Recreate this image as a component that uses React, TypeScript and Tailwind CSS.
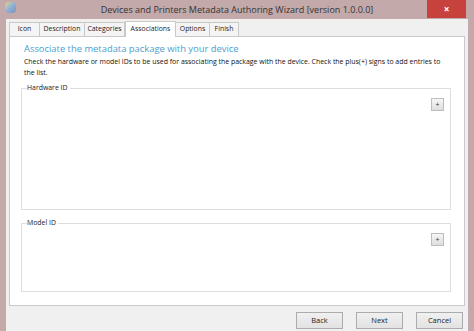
import React from 'react';

const font = { fontFamily: '"Open Sans", "Noto Sans", sans-serif' };

function PlusButton() {
  return (
    <div className="flex h-[13px] w-[13px] items-center justify-center border border-[#bdbdbd] bg-gradient-to-b from-[#f6f6f6] to-[#dedede] text-[7px] leading-none text-[#333]">
      +
    </div>
  );
}

function GroupBox({ label, className }: { label: string; className: string }) {
  return (
    <div className={`relative border border-[#dedede] ${className}`}>
      <span className="absolute -top-[6px] left-[5px] bg-white pr-[2px] text-[6.9px] leading-[10px] text-[#1a1a1a]">
        {label}
      </span>
      <div className="flex justify-end pr-[6px] pt-[9px]">
        <PlusButton />
      </div>
    </div>
  );
}

const tabs = ['Icon', 'Description', 'Categories', 'Associations', 'Options', 'Finish'];
const tabWidths = ['w-[31px]', 'w-[46px]', 'w-[41px]', 'w-[51px]', 'w-[35px]', 'w-[30px]'];

export default function App() {
  return (
    <div style={font} className="flex h-[331px] w-[474px] flex-col overflow-hidden bg-[#c3a9aa]">
      {/* title bar */}
      <div className="relative flex h-[19px] shrink-0 items-center justify-center">
        <div className="absolute left-[5px] top-[2px] h-[11px] w-[11px] rounded-sm bg-gradient-to-br from-[#e8d27a] via-[#8fb1d9] to-[#7d8fb8]" />
        <span className="text-[9px] leading-none text-[#333]">
          Devices and Printers Metadata Authoring Wizard [version 1.0.0.0]
        </span>
        <div className="absolute right-[8px] top-0 flex h-[18px] w-[39px] items-center justify-center bg-[#c8423d] text-[10px] font-bold leading-none text-white">
          ×
        </div>
      </div>

      {/* client */}
      <div className="mx-[6px] flex flex-1 flex-col bg-[#f0f0f0] px-[3px] pt-[2px]">
        <div className="flex h-[15px] items-end">
          {tabs.map((t, i) => (
            <div
              key={t}
              className={`${tabWidths[i]} flex items-center justify-center border border-b-0 border-[#c9c9c9] text-[6.9px] leading-none text-[#1a1a1a] ${
                t === 'Associations'
                  ? 'relative z-10 -mb-px h-[16px] bg-white'
                  : 'h-[14px] bg-[#f4f4f4] -ml-px first:ml-0'
              }`}
            >
              {t}
            </div>
          ))}
        </div>
        <div className="h-[270px] border border-[#c9c9c9] bg-white px-[14px] pt-[6px]">
          <div className="text-[9.4px] leading-[12px] text-[#4ea0cf]">Associate the metadata package with your device</div>
          <div className="mt-[1px] whitespace-nowrap text-[6.95px] leading-[11px] text-[#111]">
            Check the hardware or model IDs to be used for associating the package with the device. Check the plus(+) signs to add entries to
            <br />
            the list.
          </div>
          <GroupBox label="Hardware ID" className="-ml-[3px] mr-[-1px] mt-[10px] h-[122px]" />
          <GroupBox label="Model ID" className="-ml-[3px] mr-[-1px] mt-[13px] h-[69px]" />
        </div>
        <div className="flex justify-end gap-[13px] pr-[2px] pt-[6px]">
          {['Back', 'Next', 'Cancel'].map((b) => (
            <div
              key={b}
              className="flex h-[17px] w-[47px] items-center justify-center border border-[#acacac] bg-gradient-to-b from-[#f0f0f0] to-[#e2e2e2] text-[7.5px] leading-none text-[#222]"
            >
              {b}
            </div>
          ))}
        </div>
      </div>
    </div>
  );
}
